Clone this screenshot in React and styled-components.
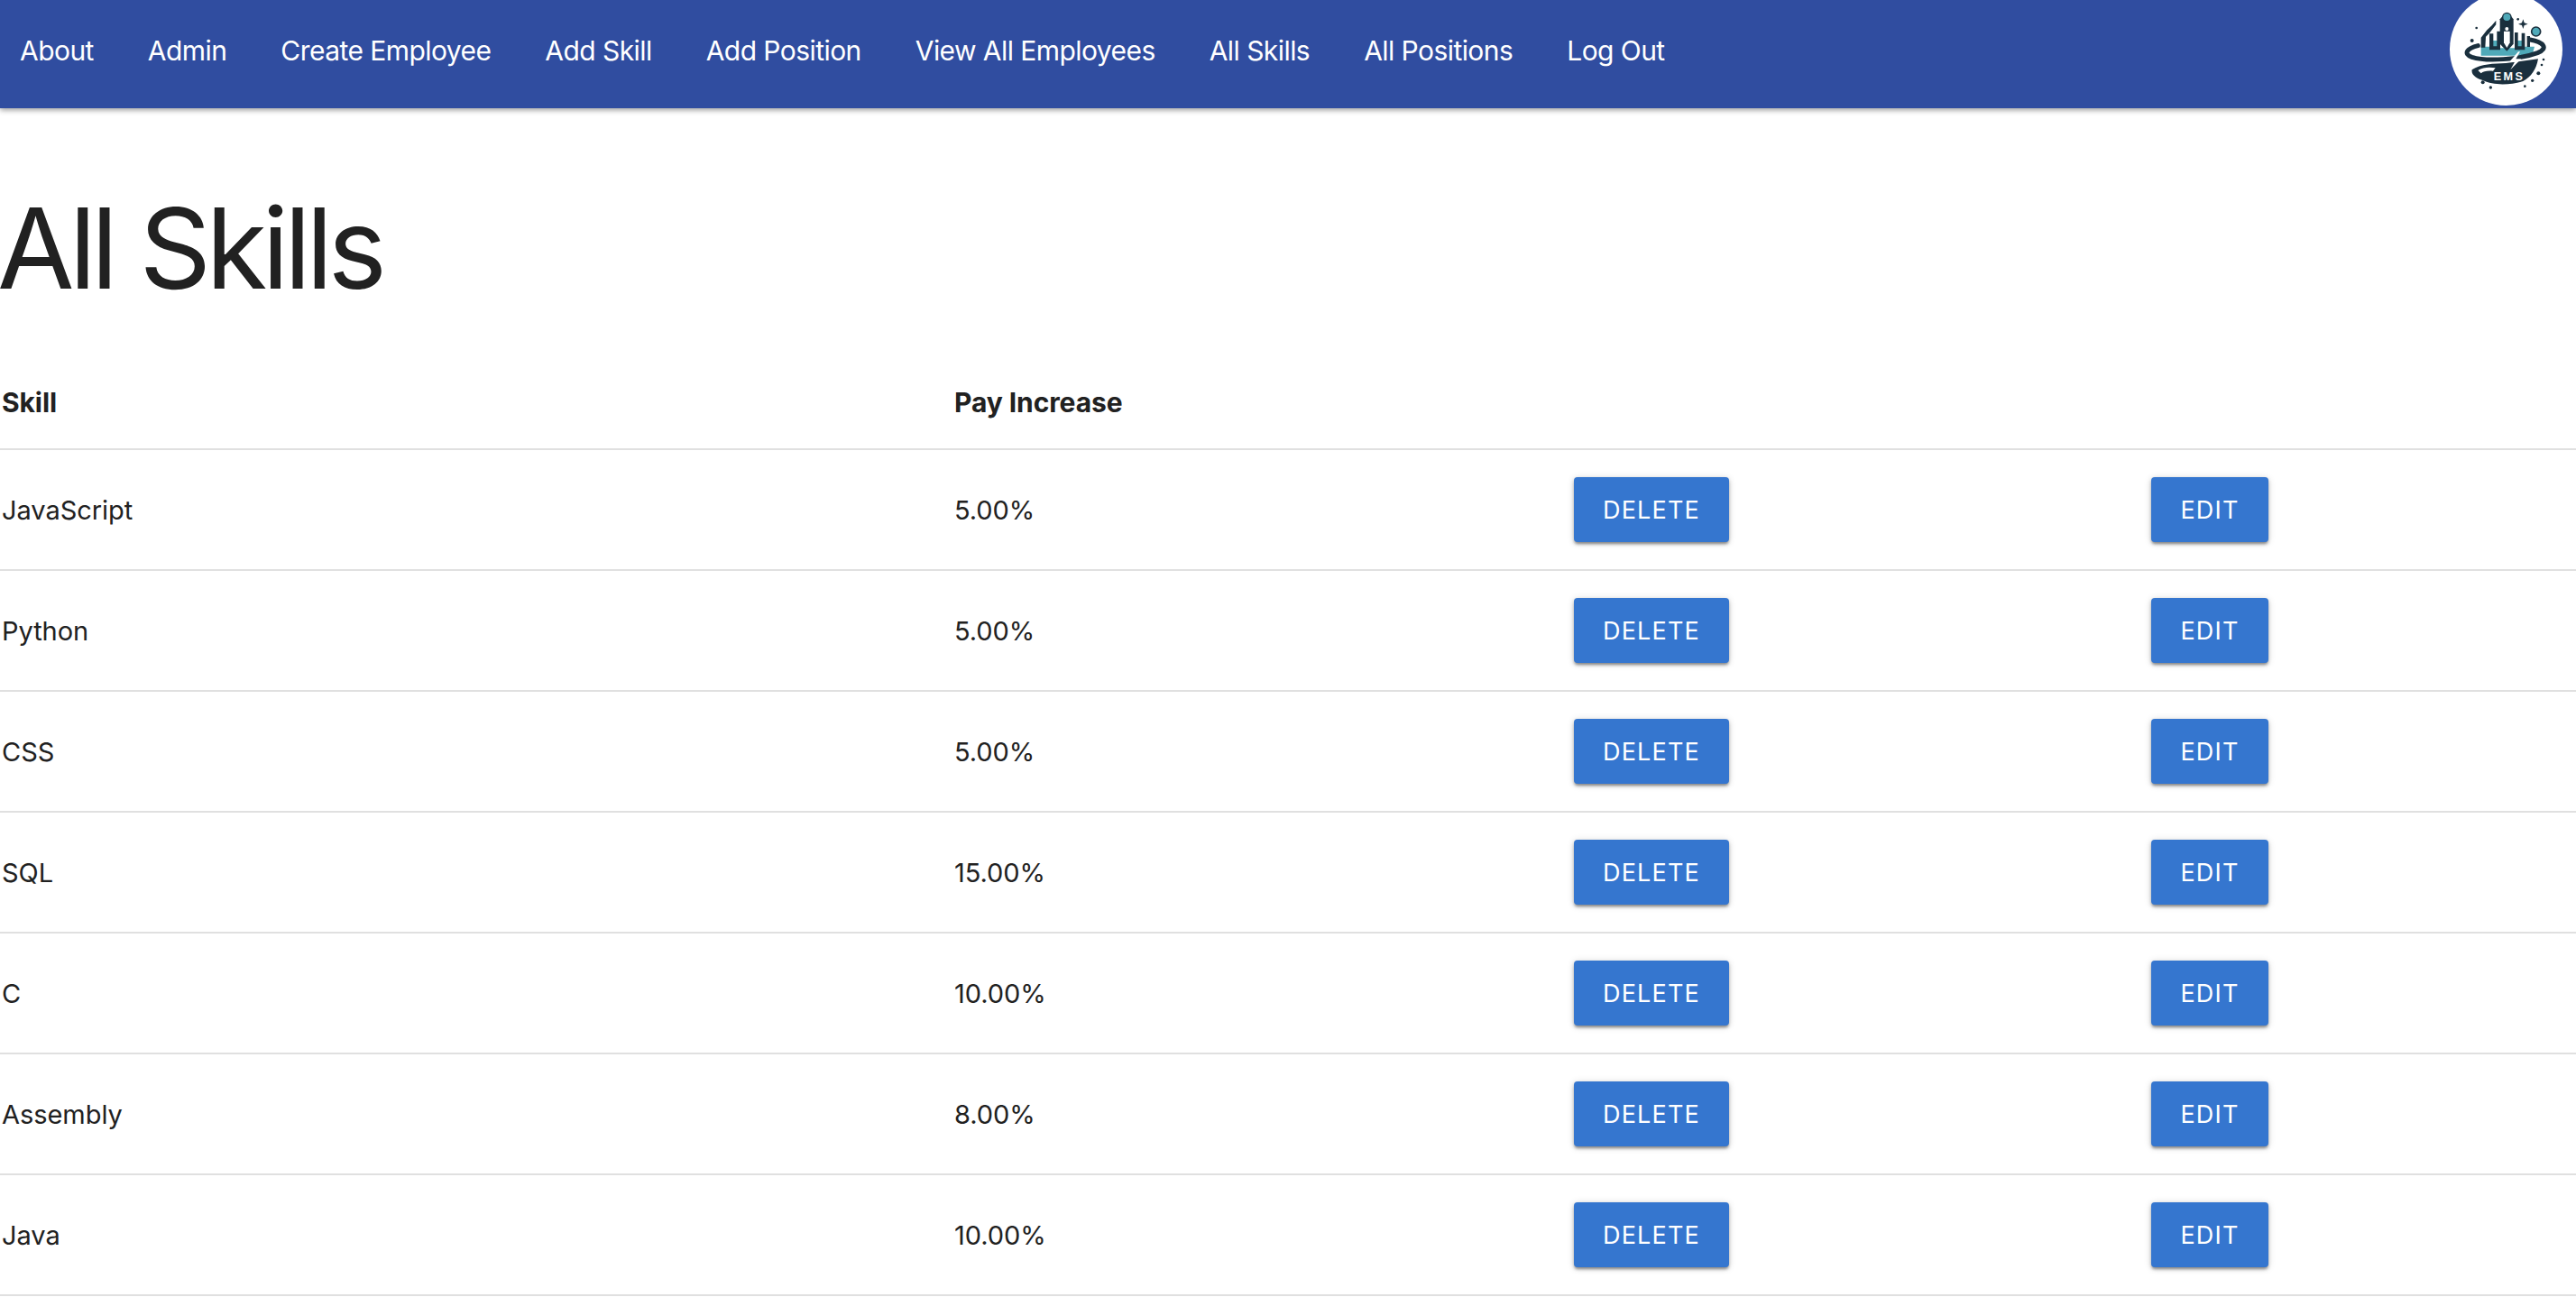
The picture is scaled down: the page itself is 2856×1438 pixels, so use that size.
import styled, { createGlobalStyle } from "styled-components";

const GlobalStyle = createGlobalStyle`
  html, body {
    margin: 0;
    padding: 0;
    background: #fff;
    font-family: Inter, "Liberation Sans", sans-serif;
    color: #212121;
  }
`;

const NavBar = styled.header`
  height: 120px;
  background: #304da0;
  box-shadow: 0 2px 6px rgba(0, 0, 0, 0.4);
  display: flex;
  align-items: flex-start;
  justify-content: space-between;
  padding: 0 15px 0 22px;
  overflow: hidden;
  position: relative;
`;

const NavLinks = styled.nav`
  display: flex;
  gap: 60px;
  height: 112px;
  align-items: center;
`;

const NavLink = styled.a`
  color: #fff;
  font-size: 30px;
  line-height: 1;
  white-space: nowrap;
  letter-spacing: -0.56px;
`;

const LogoBadge = styled.div`
  width: 125px;
  height: 125px;
  margin-top: -8px;
  border-radius: 50%;
  background: #fff;
  flex: none;
`;

const Main = styled.main`
  padding-top: 80px;
`;

const Title = styled.h1`
  margin: 0 0 0 -3px;
  font-size: 124px;
  font-weight: 400;
  line-height: 150px;
  letter-spacing: -5.75px;
  color: #212121;
`;

const Table = styled.div`
  margin-top: 47px;
`;

const Row = styled.div`
  box-sizing: border-box;
  display: grid;
  grid-template-columns: 1056px 687px 640px 1fr;
  align-items: center;
  height: ${(p) => (p.$head ? "102px" : "134px")};
  padding-bottom: ${(p) => (p.$head ? "2px" : "0")};
  border-bottom: 2px solid #e0e0e0;
`;

const Cell = styled.div`
  padding-left: 2px;
  font-size: ${(p) => (p.$head ? "30px" : "29px")};
  font-weight: ${(p) => (p.$head ? 700 : 400)};
  letter-spacing: ${(p) => (p.$head ? "-0.1px" : "-0.05px")};
`;

const ActionButton = styled.button`
  height: 72px;
  width: ${(p) => p.$width}px;
  margin-left: 2px;
  border: 0;
  border-radius: 4px;
  background: #3576cf;
  color: #fff;
  font-family: Inter, sans-serif;
  font-size: 27px;
  letter-spacing: 1.2px;
  box-shadow: 0 3px 3px -1px rgba(0, 0, 0, 0.3), 0 2px 4px rgba(0, 0, 0, 0.2), 0 1px 8px rgba(0, 0, 0, 0.14);
`;

const links = ["About", "Admin", "Create Employee", "Add Skill", "Add Position", "View All Employees", "All Skills", "All Positions", "Log Out"];

const skills = [
  ["JavaScript", "5.00%"],
  ["Python", "5.00%"],
  ["CSS", "5.00%"],
  ["SQL", "15.00%"],
  ["C", "10.00%"],
  ["Assembly", "8.00%"],
  ["Java", "10.00%"],
];

// logo coords follow a 3x crop of the badge, hence the odd viewBox
function Logo() {
  const dark = "#1a2f3d";
  const teal = "#4fa9b8";
  return (
    <svg viewBox="-12 -24 375 375" width="125" height="125">
      {/* teal skyline base */}
      <path d="M92 185 V155 H125 V135 H150 V160 H205 V135 H235 V155 H270 L262 185 Z" fill={teal} />
      {/* skyline bars */}
      <g fill={dark}>
        <path d="M92 158 L92 125 L112 100 L128 85 L142 68 L142 82 L120 110 L108 122 L106 158 Z" />
        <path d="M120 112 h13 v42 h12 v-50 h11 v62 h-36 z" />
        <path d="M204 108 h11 v46 h12 v-44 h11 v56 h-34 z" />
        <path d="M245 120 h10 v36 h-10 z" />
      </g>
      {/* pencil */}
      <path d="M155 64 Q178 32 200 64 V146 L178 170 L155 146 Z" fill={dark} />
      <path d="M168 104 h20 v38 l-10 17 -10 -17 z" fill="#fff" />
      <circle cx="178" cy="96" r="6" fill="#fff" />
      <circle cx="178" cy="57" r="14" fill={teal} stroke={dark} strokeWidth="4" />
      <circle cx="275" cy="105" r="15" fill={teal} stroke={dark} strokeWidth="5" />
      <path d="M232 64 l4 12 12 4 -12 4 -4 12 -4 -12 -12 -4 12 -4 z" fill={dark} />
      {/* orbit */}
      <path d="M255 132 C300 140 318 160 280 176 C220 198 110 205 62 190 C30 178 48 160 82 152" fill="none" stroke={dark} strokeWidth="15" strokeLinecap="round" />
      {/* bowl */}
      <path d="M62 232 C90 212 135 212 175 210 L282 196 C276 232 258 256 232 270 C190 284 130 284 100 268 C82 262 58 252 62 232 Z" fill={dark} />
      <path d="M82 234 C100 222 125 224 140 226 L132 236 C115 234 100 236 92 244 Z" fill="#fff" />
      <path d="M216 172 L186 206 H204 L190 232 L226 196 H208 L222 172 Z" fill="#fff" />
      <text x="186" y="268" textAnchor="middle" fontFamily="Liberation Sans, sans-serif" fontWeight="700" fontSize="38" letterSpacing="7" fill="#fff">EMS</text>
      {/* specks */}
      <g fill={dark}>
        <circle cx="77" cy="93" r="4" />
        <circle cx="62" cy="135" r="6" />
        <circle cx="215" cy="64" r="4" />
        <circle cx="300" cy="198" r="4" />
        <circle cx="294" cy="216" r="4" />
        <circle cx="283" cy="244" r="6" />
        <circle cx="263" cy="268" r="5" />
        <circle cx="238" cy="287" r="4" />
        <circle cx="98" cy="274" r="6" />
        <circle cx="124" cy="291" r="5" />
      </g>
    </svg>
  );
}

export default function App() {
  return (
    <>
      <GlobalStyle />
      <NavBar>
        <NavLinks>
          {links.map((l) => (
            <NavLink key={l}>{l}</NavLink>
          ))}
        </NavLinks>
        <LogoBadge>
          <Logo />
        </LogoBadge>
      </NavBar>
      <Main>
        <Title>All Skills</Title>
        <Table>
          <Row $head>
            <Cell $head>Skill</Cell>
            <Cell $head>Pay Increase</Cell>
            <div />
            <div />
          </Row>
          {skills.map(([name, pay]) => (
            <Row key={name}>
              <Cell>{name}</Cell>
              <Cell>{pay}</Cell>
              <div>
                <ActionButton $width={172}>DELETE</ActionButton>
              </div>
              <div>
                <ActionButton $width={130}>EDIT</ActionButton>
              </div>
            </Row>
          ))}
        </Table>
      </Main>
    </>
  );
}
